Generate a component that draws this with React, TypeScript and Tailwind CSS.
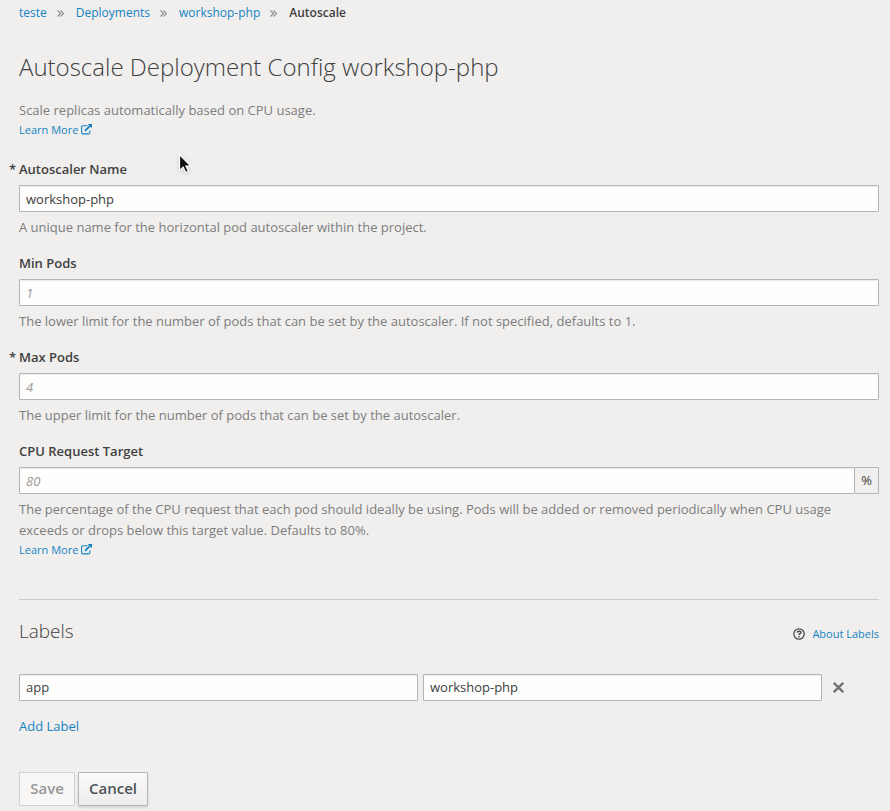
import { ReactNode } from "react";

function LinkIcon() {
  return (
    <svg className="ml-[3px] inline-block h-[11px] w-[11px] align-[-1px]" viewBox="0 0 11 11" fill="none" stroke="currentColor">
      <path d="M6.500 1.700H2Q.6 1.700 .6 3.100V8.500Q.6 9.900 2 9.900H7.500Q8.900 9.900 8.900 8.500V6.500" strokeWidth="1.100" />
      <path d="M4 6.800l5-5" strokeWidth="1.700" />
      <path d="M6.700 0H11v4.300z" fill="currentColor" stroke="none" />
    </svg>
  );
}

function LearnMore() {
  return (
    <a className="block h-5 text-[11px] leading-5 text-[#1583c2]">
      Learn More
      <LinkIcon />
    </a>
  );
}

function Crumb({ children }: { children: ReactNode }) {
  return (
    <>
      <a className="text-[#1583c2]">{children}</a>
      <svg className="mr-[12px] ml-[10px] mt-[2px] h-[7px] w-[7px]" viewBox="0 0 7 7" fill="none" stroke="#8b8d8f" strokeWidth="1.200">
        <path d="M.5.5l3 3-3 3M3.500.5l3 3-3 3" />
      </svg>
    </>
  );
}

const inputClass =
  "block h-[27px] w-full min-w-0 rounded-[1px] border border-[#b5b5b4] bg-[#fefefd] px-1.5 text-[13px] leading-[21px] text-[#404040] shadow-[inset_0_1px_1px_rgba(3,3,3,0.075)] outline-none placeholder:italic placeholder:text-[#999]";

type FieldProps = {
  label: string;
  required?: boolean;
  value?: string;
  placeholder?: string;
  help: string;
  suffix?: string;
};

function Field({ label, required, value, placeholder, help, suffix }: FieldProps) {
  return (
    <div className="mb-[15px]">
      <label className="mb-[5px] block h-[21px] font-semibold leading-[21px]">
        {required && <span className="-ml-[10px] inline-block w-[10px]">*</span>}
        {label}
      </label>
      <div className="flex">
        <input className={inputClass} defaultValue={value} placeholder={placeholder} />
        {suffix && (
          <span className="flex h-[27px] w-[24px] shrink-0 items-center justify-center border border-l-0 border-[#b5b5b4] bg-[#f0efee]">
            {suffix}
          </span>
        )}
      </div>
      <p className="mt-[5px] leading-[21px] text-[#7d7d7d]">{help}</p>
    </div>
  );
}

export default function App() {
  return (
    <main className="relative h-[811px] overflow-hidden bg-[#f0efee] pl-[19px] pr-[11px] font-['Open_Sans',sans-serif] text-[13px] text-[#404040]">
      <nav className="flex h-[25px] items-center text-[12px]">
        <Crumb>teste</Crumb>
        <Crumb>Deployments</Crumb>
        <Crumb>workshop-php</Crumb>
        <span className="font-semibold">Autoscale</span>
      </nav>
      <h1 className="mt-[25px] h-[34px] text-[24px] font-light leading-[34px]">Autoscale Deployment Config workshop-php</h1>
      <p className="mt-4 leading-[21px] text-[#7d7d7d]">Scale replicas automatically based on CPU usage.</p>
      <div className="mb-[19px] -mt-px">
        <LearnMore />
      </div>
      <Field label="Autoscaler Name" required value="workshop-php" help="A unique name for the horizontal pod autoscaler within the project." />
      <Field label="Min Pods" placeholder="1" help="The lower limit for the number of pods that can be set by the autoscaler. If not specified, defaults to 1." />
      <Field label="Max Pods" required placeholder="4" help="The upper limit for the number of pods that can be set by the autoscaler." />
      <Field
        label="CPU Request Target"
        placeholder="80"
        suffix="%"
        help="The percentage of the CPU request that each pod should ideally be using. Pods will be added or removed periodically when CPU usage exceeds or drops below this target value. Defaults to 80%."
      />
      <div className="-mt-[16px]">
        <LearnMore />
      </div>
      <hr className="mt-[39px] border-[#cbcbca]" />
      <section>
        <div className="mt-[19px] flex h-[26px] items-center justify-between">
          <h2 className="pb-[2px] text-[19px] font-light leading-[24px]">Labels</h2>
          <div className="flex items-center pt-1 text-[11px]">
            <svg className="mr-[7px] -mt-px h-3 w-3" viewBox="0 0 12 12" fill="none" stroke="#4a4a4a">
              <circle cx="6" cy="6" r="5.200" strokeWidth="1.300" />
              <path d="M4.200 4.600c.2-2 3.600-1.900 3.600-.1C7.800 5.600 6 5.700 6 7M6 7.900v1.300" strokeWidth="1.500" />
            </svg>
            <a className="text-[#1583c2]">About Labels</a>
          </div>
        </div>
        <div className="mt-[29px] flex items-center">
          <div className="mr-[5px] w-[399px]">
            <input className={inputClass + " pb-[2px]"} defaultValue="app" />
          </div>
          <div className="w-[399px]">
            <input className={inputClass + " pb-[2px]"} defaultValue="workshop-php" />
          </div>
          <svg className="ml-[11px] h-[11px] w-[11px]" viewBox="0 0 11 11" stroke="#727272" strokeWidth="2.300">
            <path d="M.8.8l9.400 9.400M10.200.8L.8 10.200" />
          </svg>
        </div>
        <a className="mt-[15px] block leading-[21px] text-[#1583c2]">Add Label</a>
      </section>
      <div className="mt-[35px] flex gap-[3px] text-[15px] font-semibold">
        <button className="h-[34px] w-[56px] rounded-[1px] border border-[#d1d1d0] bg-[#f8f7f6] pb-[2px] text-[#969696]">Save</button>
        <button className="h-[34px] w-[70px] rounded-[1px] border border-[#b5b5b4] bg-linear-to-b from-[#fafafa] to-[#ededed] pb-[2px] text-[#4d5258] shadow-[0_2px_3px_rgba(3,3,3,0.1)]">
          Cancel
        </button>
      </div>
      <svg className="absolute left-[178px] top-[153px] h-[21px] w-[14px] drop-shadow-sm" viewBox="0 0 14 21">
        <path d="M1.500 1.500v16l3.700-3.300 2.600 5.300 2.600-1.200-2.500-5.200h4.900z" fill="#111" stroke="#fff" strokeWidth="1.200" />
      </svg>
    </main>
  );
}
